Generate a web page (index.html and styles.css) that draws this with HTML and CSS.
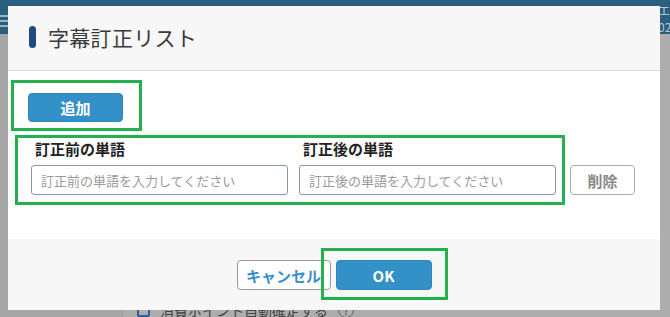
FILE: index.html
```html
<!DOCTYPE html>
<html lang="ja">
  <head>
    <meta charset="UTF-8" />
    <meta name="viewport" content="width=device-width, initial-scale=1.0" />
    <title>字幕訂正リスト</title>
    <link rel="stylesheet" href="styles.css">
  </head>
  <body>
    <div class="app">
      <div class="topbar">
        <div class="menu"><span></span><span></span><span></span></div>
        <div class="topinfo">
          <span>エ</span>
          <span>02</span>
        </div>
      </div>
      <div class="content">
        <div class="side"></div>
        <div class="main">
          <label class="check"><span class="box"></span>消費ポイント自動確定する<span class="help">?</span></label>
        </div>
      </div>
    </div>

    <div class="modal">
      <div class="modal-head">
        <span class="bar"></span>
        <h1 class="title">字幕訂正リスト</h1>
      </div>
      <div class="modal-body">
        <button class="btn btn-blue btn-add">追加</button>
        <div class="row">
          <div class="field">
            <p class="label">訂正前の単語</p>
            <input class="input" type="text" placeholder="訂正前の単語を入力してください" />
          </div>
          <div class="field">
            <p class="label">訂正後の単語</p>
            <input class="input" type="text" placeholder="訂正後の単語を入力してください" />
          </div>
          <button class="btn btn-del">削除</button>
        </div>
      </div>
      <div class="modal-foot">
        <button class="btn btn-cancel">キャンセル</button>
        <button class="btn btn-blue btn-ok">OK</button>
      </div>
    </div>

    <!-- 注釈の枠 -->
    <div class="mark mark-add"></div>
    <div class="mark mark-row"></div>
    <div class="mark mark-ok"></div>
  </body>
</html>
```

FILE: styles.css
```css
* {
  margin: 0;
  padding: 0;
  box-sizing: border-box;
}
body {
  width: 670px;
  height: 317px;
  overflow: hidden;
  font-family: "Noto Sans CJK JP", "Noto Sans", sans-serif;
  background-color: #aaaaaa;
}
.app {
  height: 317px;
  display: flex;
  flex-direction: column;
}
.topbar {
  height: 50px;
  background-color: #2a5f7e;
  display: flex;
  justify-content: space-between;
}
.menu {
  display: flex;
  flex-direction: column;
  gap: 3px;
  padding-top: 15px;
  width: 8px;
}
.menu span {
  display: block;
  height: 2px;
  background-color: #9fb4c2;
}
.topinfo {
  display: flex;
  flex-direction: column;
  gap: 2px;
  padding-top: 4px;
  width: 10px;
  color: #b9c9d4;
  font-size: 12px;
  line-height: 14px;
  overflow: hidden;
}
.topinfo span {
  display: block;
  height: 14px;
  white-space: nowrap;
  text-indent: -2px;
}
.content {
  flex: 1;
  display: flex;
}
.side {
  width: 123px;
  background-color: #a6a6a6;
  border-right: 1px solid #9c9c9c;
}
.main {
  flex: 1;
  background-color: #adadad;
  padding: 266px 0 0 14px;
}
.check {
  display: flex;
  align-items: center;
  gap: 10px;
  font-size: 14px;
  color: #444;
}
.box {
  width: 13px;
  height: 13px;
  border: 2px solid #2a5f9a;
  border-radius: 2px;
}
.help {
  width: 16px;
  height: 16px;
  border: 1px solid #666;
  border-radius: 50%;
  font-size: 11px;
  text-align: center;
  line-height: 14px;
}

/* モーダル */
.modal {
  position: absolute;
  left: 8px;
  top: 6px;
  width: 652px;
  height: 304px;
  background-color: #fff;
  display: flex;
  flex-direction: column;
}
.modal-head {
  height: 65px;
  background-color: #f7f7f7;
  border-bottom: 1px solid #dcdcdc;
  display: flex;
  align-items: center;
  padding: 0 0 2px 21px;
  gap: 12px;
}
.bar {
  display: block;
  width: 7px;
  height: 22px;
  border-radius: 4px;
  background-color: #1f4b80;
}
.title {
  font-size: 21px;
  font-weight: normal;
  color: #3a3a3a;
  letter-spacing: 0.3px;
}
.modal-body {
  height: 168px;
  padding: 22px 0 0 20px;
}
.btn {
  font-family: inherit;
  font-size: 15px;
  font-weight: bold;
  height: 30px;
  border-radius: 4px;
  cursor: pointer;
}
.btn-blue {
  background-color: #3491c7;
  border: 1px solid #2f86ba;
  color: #fff;
}
.btn-add {
  width: 95px;
  height: 29px;
}
.row {
  display: flex;
  align-items: flex-end;
  margin-top: 17px;
  padding-left: 3px;
}
.field {
  width: 257px;
  margin-right: 11px;
}
.field + .field {
  margin-right: 14px;
}
.label {
  font-size: 15px;
  font-weight: bold;
  color: #222;
  line-height: 20px;
  padding-left: 4px;
  margin-bottom: 6px;
}
.input {
  display: block;
  width: 257px;
  height: 30px;
  border: 1px solid #8496b2;
  border-radius: 3px;
  padding: 0 9px;
  font-family: inherit;
  font-size: 13px;
  color: #333;
}
.input::placeholder {
  color: #9a9a9a;
}
.btn-del {
  width: 65px;
  background-color: #fff;
  border: 1px solid #aaa;
  color: #888;
}
.modal-foot {
  flex: 1;
  background-color: #f7f7f7;
  display: flex;
  justify-content: center;
  align-items: flex-start;
  gap: 5px;
  padding-top: 21px;
}
.btn-cancel {
  width: 94px;
  background-color: #fff;
  border: 1px solid #9a9a9a;
  color: #3a8fca;
}
.btn-ok {
  width: 96px;
}

/* 緑の注釈枠 */
.mark {
  position: absolute;
  border: 3px solid #22b14c;
}
.mark-add {
  left: 11px;
  top: 80px;
  width: 131px;
  height: 51px;
}
.mark-row {
  left: 15px;
  top: 135px;
  width: 550px;
  height: 70px;
}
.mark-ok {
  left: 321px;
  top: 248px;
  width: 127px;
  height: 52px;
}
```
